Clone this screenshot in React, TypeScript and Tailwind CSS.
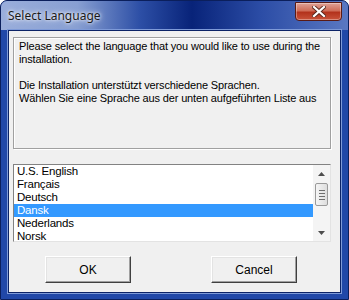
const items = ["U.S. English", "Français", "Deutsch", "Dansk", "Nederlands", "Norsk"];

function CloseButton() {
  return (
    <div className="mt-[1px] mr-[6px] flex h-[19px] w-[47px] items-center justify-center rounded-b-[4px] border border-[#5a1a14] bg-[linear-gradient(180deg,#dfa297_0%,#cf6d58_45%,#b3321c_55%,#c9533a_100%)] shadow-[inset_0_0_0_1px_rgba(255,255,255,0.35)]">
      <svg width="14" height="11" viewBox="0 0 14 11">
        <path d="M2 1 L12 10 M12 1 L2 10" stroke="#5a2a20" strokeWidth="4" strokeLinecap="square" />
        <path d="M2 1 L12 10 M12 1 L2 10" stroke="#ffffff" strokeWidth="2.2" strokeLinecap="square" />
      </svg>
    </div>
  );
}

function ScrollBar() {
  return (
    <div className="flex w-[17px] flex-col items-center bg-[#f4f4f4]">
      <div className="flex h-[17px] w-full items-center justify-center">
        <svg width="7" height="4" viewBox="0 0 7 4"><path d="M0 4 L3.5 0 L7 4 Z" fill="#4d4d4d" /></svg>
      </div>
      <div className="mt-[1px] flex h-[23px] w-[13px] flex-col items-center justify-center gap-[2px] rounded-[2px] border border-[#9a9a9a] bg-[linear-gradient(90deg,#f5f5f5,#dedede)]">
        <div className="h-[1px] w-[6px] bg-[#6e6e6e]" />
        <div className="h-[1px] w-[6px] bg-[#6e6e6e]" />
        <div className="h-[1px] w-[6px] bg-[#6e6e6e]" />
        <div className="h-[1px] w-[6px] bg-[#6e6e6e]" />
      </div>
      <div className="flex-1" />
      <div className="flex h-[17px] w-full items-center justify-center">
        <svg width="7" height="4" viewBox="0 0 7 4"><path d="M0 0 L3.5 4 L7 0 Z" fill="#4d4d4d" /></svg>
      </div>
    </div>
  );
}

function Button({ label }: { label: string }) {
  return (
    <div className="flex h-[27px] w-[86px] items-center justify-center border border-t-[#ffffff] border-l-[#ffffff] border-r-[#404040] border-b-[#404040] bg-[#f0f0f0] shadow-[inset_-1px_-1px_0_#a0a0a0,inset_1px_1px_0_#e3e3e3] text-[12px] text-black">
      {label}
    </div>
  );
}

export default function App() {
  return (
    <div className="flex h-[300px] w-[349px] flex-col overflow-hidden rounded-t-[7px] border border-[#0b1f5c] bg-[#2148a8] font-['Liberation_Sans',sans-serif]">
      <div className="flex h-[29px] shrink-0 items-start justify-between bg-[linear-gradient(90deg,#9aaedb_0%,#889fd2_22%,#2d4fa6_40%,#082379_55%,#2c4da6_75%,#5a78c2_100%)]">
        <div className="pl-[7px] pt-[6px] font-['Noto_Sans',sans-serif] text-[12px] text-[#1a1a1a] [text-shadow:0_0_6px_#ffffff,0_0_3px_#ffffff]">
          Select Language
        </div>
        <CloseButton />
      </div>
      <div className="mx-[7px] mb-[6px] flex flex-1 flex-col border border-[#0c2366] shadow-[0_0_0_1px_#7e9ad8]">
        <div className="flex flex-1 flex-col bg-[#f0f0f0] pl-[4px] pr-[9px] pt-[6px]">
          <div className="h-[112px] border border-[#a0a0a0] shadow-[inset_1px_1px_0_#ffffff,1px_1px_0_#ffffff] px-[5px] pt-[2px] text-[11px] leading-[13px] tracking-[-0.15px] text-black">
            <p>Please select the language that you would like to use during the installation.</p>
            <p className="mt-[13px]">Die Installation unterstützt verschiedene Sprachen.</p>
            <p>Wählen Sie eine Sprache aus der unten aufgeführten Liste aus</p>
          </div>
          <div className="mt-[15px] flex h-[78px] border border-t-[#828282] border-l-[#828282] border-r-[#e3e3e3] border-b-[#e3e3e3] bg-white">
            <div className="flex-1 overflow-hidden">
              {items.map((item) => (
                <div
                  key={item}
                  className={
                    item === "Dansk"
                      ? "h-[13px] bg-[#3399ff] pl-[3px] text-[11.5px] leading-[13px] tracking-[-0.2px] text-white"
                      : "h-[13px] pl-[3px] text-[11.5px] leading-[13px] tracking-[-0.2px] text-black"
                  }
                >
                  {item}
                </div>
              ))}
            </div>
            <ScrollBar />
          </div>
          <div className="flex gap-[80px] pl-[32px] pt-[14px]">
            <Button label="OK" />
            <Button label="Cancel" />
          </div>
        </div>
      </div>
    </div>
  );
}
